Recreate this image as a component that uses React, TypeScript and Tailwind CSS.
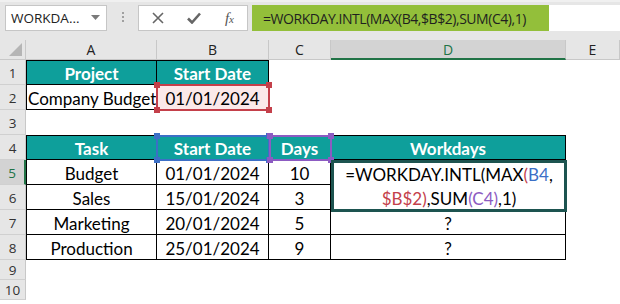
import React from 'react';

const COLS = ['A', 'B', 'C', 'D', 'E'];
const TEAL = 'bg-[#0e9f9b]';

type Cell = { text?: string; head?: boolean; cls?: string };

// rows 1..10, columns A..E
const ROWS: Cell[][] = [
  [{ text: 'Project', head: true, cls: 'border-t border-l' }, { text: 'Start Date', head: true, cls: 'border-t' }, {}, {}, {}],
  [{ text: 'Company Budget', cls: 'border-l border-r border-b border-black justify-start pl-[1px]' }, { text: '01/01/2024', cls: 'border-r border-b border-black bg-[#fbe9e9]' }, {}, {}, {}],
  [{}, {}, {}, {}, {}],
  [{ text: 'Task', head: true, cls: 'border-t border-l' }, { text: 'Start Date', head: true, cls: 'border-t' }, { text: 'Days', head: true, cls: 'border-t' }, { text: 'Workdays', head: true, cls: 'border-t' }, {}],
  [{ text: 'Budget', cls: 'body border-l' }, { text: '01/01/2024', cls: 'body' }, { text: '10', cls: 'body' }, { text: '', cls: 'body' }, {}],
  [{ text: 'Sales', cls: 'body border-l' }, { text: '15/01/2024', cls: 'body' }, { text: '3', cls: 'body' }, { text: '', cls: 'body' }, {}],
  [{ text: 'Marketing', cls: 'body border-l' }, { text: '20/01/2024', cls: 'body' }, { text: '5', cls: 'body' }, { text: '?', cls: 'body' }, {}],
  [{ text: 'Production', cls: 'body border-l' }, { text: '25/01/2024', cls: 'body' }, { text: '9', cls: 'body' }, { text: '?', cls: 'body' }, {}],
  [{}, {}, {}, {}, {}],
  [{}, {}, {}, {}, {}],
];

const ROW_H = ['h-[25px]', 'h-[25px]', 'h-[25px]', 'h-[25px]', 'h-[25px]', 'h-[25px]', 'h-[25px]', 'h-[25px]', 'h-[20px]', 'h-[20px]'];

function Handles({ color }: { color: string }) {
  const sq = `absolute w-[6px] h-[6px] ${color}`;
  return (
    <>
      <span className={`${sq} -left-[4px] -top-[4px]`} />
      <span className={`${sq} -right-[4px] -top-[4px]`} />
      <span className={`${sq} -left-[4px] -bottom-[4px]`} />
      <span className={`${sq} -right-[4px] -bottom-[4px]`} />
    </>
  );
}

function Toolbar() {
  return (
    <div className="h-[40px] bg-[#e6e6e6] border-t-2 border-[#f0f0f0] flex items-start pt-[3px] pl-[5px] font-['Open_Sans',sans-serif]">
      {/* Name box */}
      <div className="w-[102px] h-[26px] bg-white border border-[#c6c6c6] flex items-center pl-[5px] pr-[6px] justify-between">
        <span className="text-[13.5px] text-[#222]">WORKDA...</span>
        <svg width="9" height="6" viewBox="0 0 9 6"><path d="M0 0h9L4.5 5z" fill="#7a7a7a" /></svg>
      </div>
      <div className="w-[31px] flex flex-col items-center gap-[2px] pt-[7px]">
        <span className="w-[2px] h-[2px] bg-[#a0a0a0]" />
        <span className="w-[2px] h-[2px] bg-[#a0a0a0]" />
        <span className="w-[2px] h-[2px] bg-[#a0a0a0]" />
      </div>
      {/* cancel / enter / fx */}
      <div className="w-[110px] h-[26px] bg-white border border-[#c6c6c6] flex items-center justify-between pl-[13px] pr-[13px]">
        <svg width="12" height="12" viewBox="0 0 12 12">
          <path d="M1 1l10 10M11 1L1 11" stroke="#666" strokeWidth="1.6" />
        </svg>
        <svg width="14" height="12" viewBox="0 0 14 12">
          <path d="M1 6.5l4 4L13 1.5" stroke="#666" strokeWidth="2.6" fill="none" />
        </svg>
        <span className="font-['Liberation_Serif',serif] italic text-[15px] text-[#555] leading-none">
          f<span className="text-[11px]">x</span>
        </span>
      </div>
      <div className="ml-[4px] w-[297px] h-[26px] bg-[#93bf3a] flex items-center pl-[11px] overflow-hidden">
        <span className="text-[14px] text-[#1f1f1f] tracking-[-0.45px] whitespace-nowrap">=WORKDAY.INTL(MAX(B4,$B$2),SUM(C4),1)</span>
      </div>
      <div className="flex-1 h-[26px] bg-white" />
    </div>
  );
}

function Sheet() {
  return (
    <div className="relative font-['Lato',sans-serif]">
      <div className="grid grid-cols-[26px_131px_112px_62px_235px_54px]">
        {/* column header row */}
        <div className="h-[20px] bg-[#e6e6e6] border-r border-b border-[#c8c8c8] flex items-end justify-end pr-[3px] pb-[3px]">
          <svg width="13" height="13" viewBox="0 0 13 13"><path d="M13 0v13H0z" fill="#b5b5b5" /></svg>
        </div>
        {COLS.map((c) => (
          <div
            key={c}
            className={`h-[20px] flex items-center justify-center text-[14px] font-['Open_Sans',sans-serif] border-r border-[#c8c8c8] ${
              c === 'D' ? 'bg-[#d3d3d3] text-[#217346] border-b-2 border-b-[#217346]' : 'bg-[#e6e6e6] text-[#222] border-b border-b-[#c8c8c8]'
            }`}
          >
            {c}
          </div>
        ))}

        {ROWS.map((row, r) => (
          <React.Fragment key={r}>
            <div
              className={`${ROW_H[r]} flex items-center justify-center pt-[2px] text-[13.5px] font-['Open_Sans',sans-serif] border-b border-[#d0d0d0] ${
                r === 4 ? 'bg-[#d3d3d3] text-[#217346] border-r-2 border-r-[#217346]' : 'bg-[#e6e6e6] text-[#333] border-r border-r-[#c8c8c8]'
              }`}
            >
              {r + 1}
            </div>
            {row.map((cell, c) => {
              if (cell.head) {
                return (
                  <div
                    key={c}
                    className={`${ROW_H[r]} ${TEAL} border-black border-r border-b ${cell.cls ?? ''} flex items-center justify-center pt-[3px] text-white font-bold text-[17px]`}
                  >
                    {cell.text}
                  </div>
                );
              }
              const body = cell.cls?.startsWith('body');
              const extra = body ? cell.cls!.replace('body', '') + ' border-r border-b border-black' : cell.cls ?? '';
              return (
                <div
                  key={c}
                  className={`${ROW_H[r]} flex items-center justify-center pt-[3px] text-[17px] text-black whitespace-nowrap overflow-hidden ${extra}`}
                >
                  {cell.text}
                </div>
              );
            })}
          </React.Fragment>
        ))}
      </div>

      {/* B2 reference highlight */}
      <div className="absolute left-[156px] top-[44px] w-[114px] h-[27px] border-2 border-[#c4404a]">
        <Handles color="bg-[#c4404a]" />
      </div>
      {/* B4 reference highlight */}
      <div className="absolute left-[156px] top-[95px] w-[114px] h-[26px] border-2 border-[#3c6fc6]">
        <Handles color="bg-[#3c6fc6]" />
      </div>
      {/* C4 reference highlight */}
      <div className="absolute left-[269px] top-[95px] w-[63px] h-[26px] border-2 border-[#8c5bc2]">
        <Handles color="bg-[#8c5bc2]" />
      </div>

      {/* in-cell editor D5 */}
      <div className="absolute left-[331px] top-[120px] w-[236px] h-[52px] bg-white border-[3px] border-[#1d5450] flex flex-col items-center justify-center pt-[2px] text-[17px] leading-[24px] text-black">
        <span>
          =WORKDAY.INTL(MAX<span className="text-[#c4404a]">(</span>
          <span className="text-[#3c6fc6]">B4</span>,
        </span>
        <span>
          <span className="text-[#c4404a]">$B$2)</span>,SUM<span className="text-[#8c5bc2]">(C4)</span>,1)
        </span>
      </div>
    </div>
  );
}

export default function App() {
  return (
    <div className="w-[620px] h-[304px] bg-white overflow-hidden">
      <Toolbar />
      <Sheet />
    </div>
  );
}
